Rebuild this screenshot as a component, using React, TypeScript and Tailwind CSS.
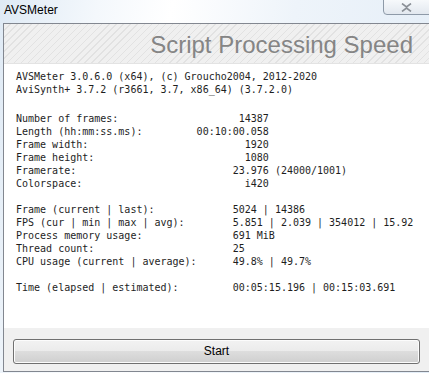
import React from "react";

const header = [
  "AVSMeter 3.0.6.0 (x64), (c) Groucho2004, 2012-2020",
  "AviSynth+ 3.7.2 (r3661, 3.7, x86_64) (3.7.2.0)",
];

// first block: values right-aligned to column 42
const right = (label: string, value: string, rest = "") =>
  label + value.padStart(42 - label.length) + rest;
// second block: values left-aligned at column 36
const left = (label: string, value: string) => label.padEnd(36) + value;

const stats = [
  right("Number of frames:", "14387"),
  right("Length (hh:mm:ss.ms):", "00:10:00.058"),
  right("Frame width:", "1920"),
  right("Frame height:", "1080"),
  right("Framerate:", "23.976", " (24000/1001)"),
  right("Colorspace:", "i420"),
  "",
  left("Frame (current | last):", "5024 | 14386"),
  left("FPS (cur | min | max | avg):", "5.851 | 2.039 | 354012 | 15.92"),
  left("Process memory usage:", "691 MiB"),
  left("Thread count:", "25"),
  left("CPU usage (current | average):", "49.8% | 49.7%"),
  "",
  left("Time (elapsed | estimated):", "00:05:15.196 | 00:15:03.691"),
];

const Lines = ({ rows }: { rows: string[] }) => (
  <div>
    {rows.map((r, i) => (
      <div key={i} className="h-[13px] leading-[13px] whitespace-pre">
        {r || " "}
      </div>
    ))}
  </div>
);

export default function App() {
  return (
    <div className="relative w-[429px] h-[373px] overflow-hidden bg-[linear-gradient(100deg,#dfeaf5_0%,#f4f8fc_20%,#ffffff_35%,#eef4fa_60%,#e3edf7_100%)] font-['Liberation_Sans',Arial,sans-serif]">
      {/* Title bar */}
      <div className="h-[23px] pl-[4px] pt-[3px] text-[12px] leading-[15px] text-black">AVSMeter</div>
      <div className="absolute right-[-4px] top-[-2px] w-[50px] h-[17px] rounded-b-[4px] border border-[#8e9aa8] bg-[linear-gradient(#f8fafc,#e2e8ef)] flex items-center justify-center">
        <svg width="11" height="9" viewBox="0 0 11 9" className="-ml-[4px] mt-[1px]">
          <path d="M1 0.5 L5.5 4 L10 0.5 M1 8.5 L5.5 5 L10 8.5" stroke="#8a8f96" strokeWidth="1.6" fill="none" />
        </svg>
      </div>

      {/* Panel */}
      <div className="ml-[3px] w-[430px] border border-[#828790] border-r-0 flex flex-col">
        <div className="h-[40px] flex items-center justify-end pr-[20px] border-b border-[#e3e3e3] bg-[repeating-linear-gradient(135deg,#f0f0f0_0px,#f0f0f0_4px,#e2e2e2_4px,#e2e2e2_5px)]">
          <span className="text-[24px] text-[#858585] leading-none mt-[2px]">Script Processing Speed</span>
        </div>
        <div className="h-[264px] bg-white pl-[12px] pt-[6px] text-[10px] text-[#1e1e1e] font-['DejaVu_Sans_Mono',monospace]">
          <Lines rows={header} />
          <div className="mt-[16px]">
            <Lines rows={stats} />
          </div>
        </div>
        <div className="h-[43px] bg-[#f0f0f0] pl-[9px] pt-[10px]">
          <button className="w-[407px] h-[25px] rounded-[3px] border border-[#707070] bg-[linear-gradient(#f2f2f2_0%,#ebebeb_50%,#dddddd_50%,#cfcfcf_100%)] text-[12px] text-black shadow-[inset_0_0_0_1px_#fcfcfc]">
            Start
          </button>
        </div>
      </div>
    </div>
  );
}
